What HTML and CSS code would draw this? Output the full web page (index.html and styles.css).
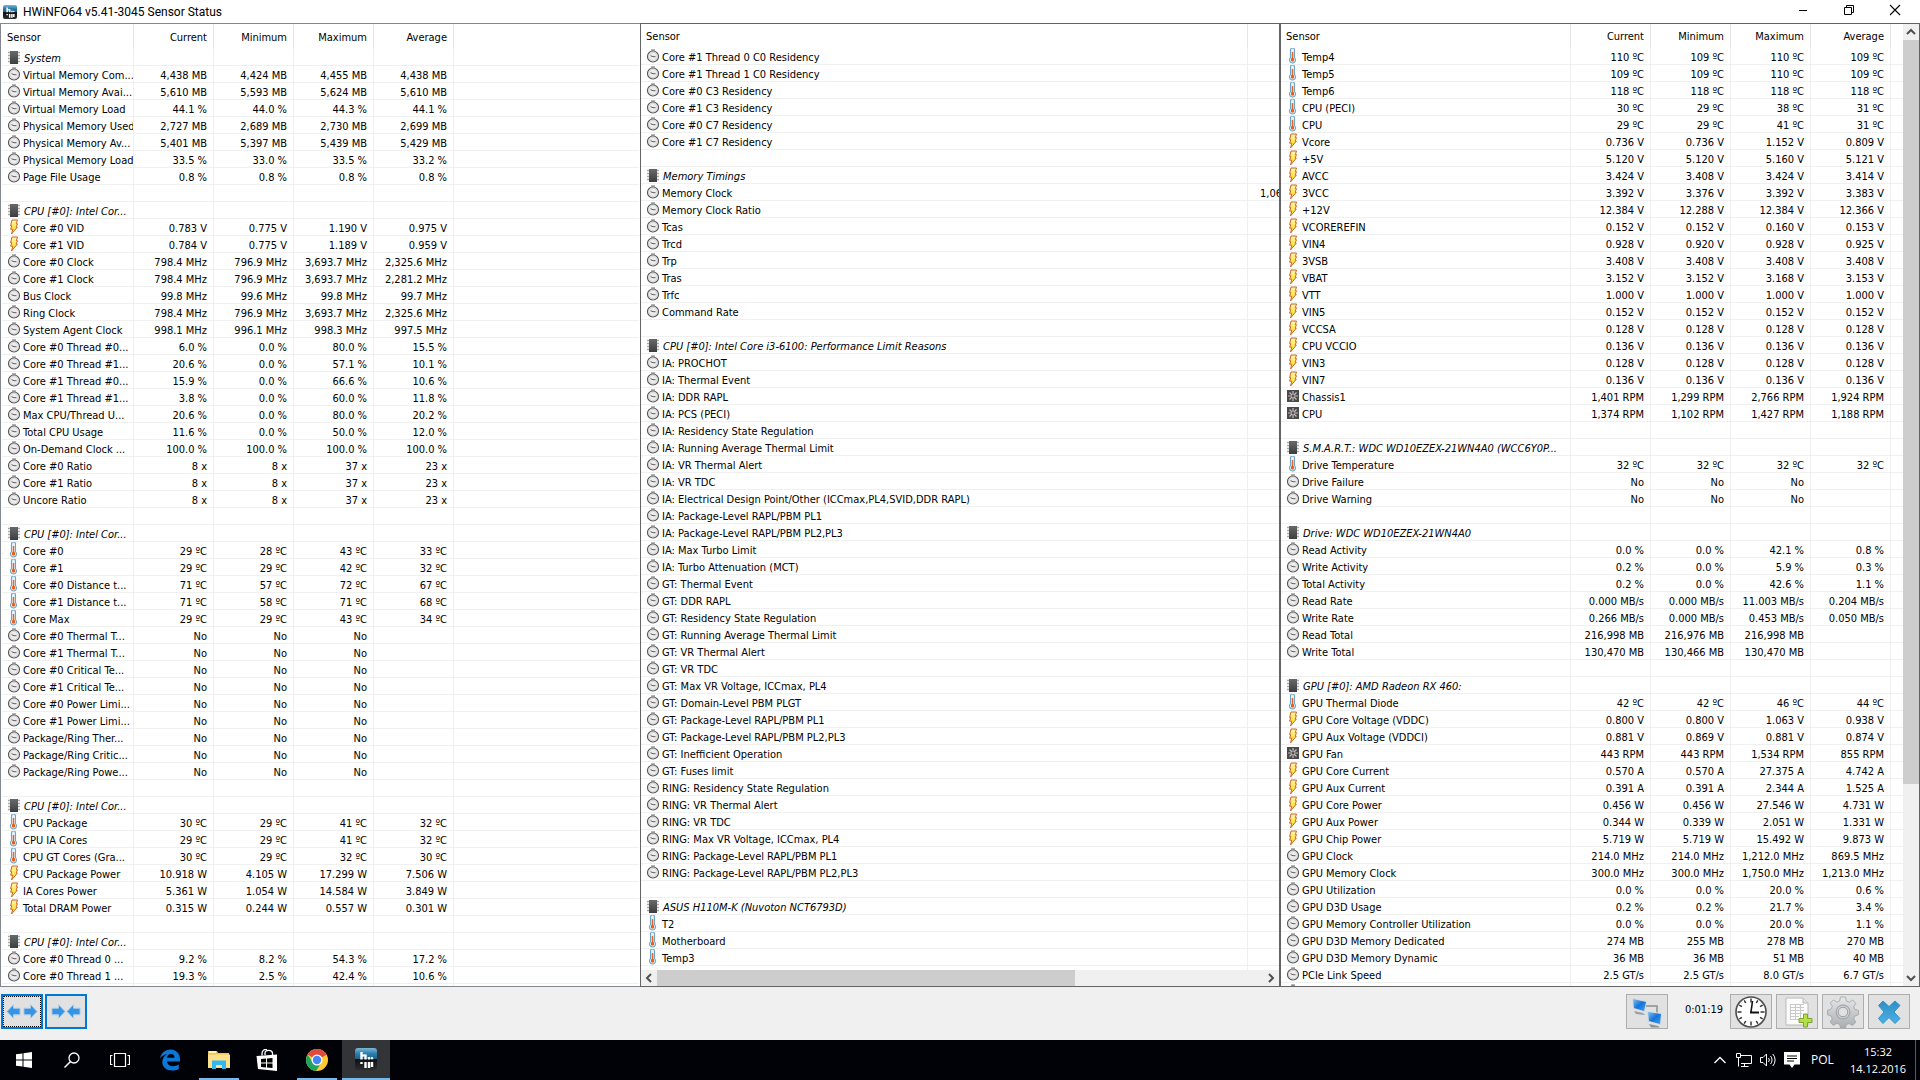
FILE: index.html
```html
<!DOCTYPE html>
<html lang="en">
<head>
<meta charset="utf-8">
<title>HWiNFO64 v5.41-3045 Sensor Status</title>
<link rel="stylesheet" href="styles.css">
</head>
<body>
<svg class="defs" aria-hidden="true">
  <defs>
    <linearGradient id="gChip" x1="0" y1="0" x2="0" y2="1"><stop offset="0" stop-color="#68696b"/><stop offset="1" stop-color="#3c3d3f"/></linearGradient>
    <linearGradient id="gBolt" x1="0" y1="0" x2="0" y2="1"><stop offset="0" stop-color="#fff7b0"/><stop offset="1" stop-color="#ffd800"/></linearGradient>
    <linearGradient id="gLogo" x1="0" y1="0" x2="0" y2="1"><stop offset="0" stop-color="#7fb6d4"/><stop offset=".25" stop-color="#2b7fb0"/><stop offset=".5" stop-color="#1b6088"/><stop offset=".52" stop-color="#111"/><stop offset="1" stop-color="#2a2d30"/></linearGradient>
    <linearGradient id="gGear" x1="0" y1="0" x2="0" y2="1"><stop offset="0" stop-color="#e6e9ea"/><stop offset="1" stop-color="#a8adb0"/></linearGradient>
    <linearGradient id="gScreen" x1="0" y1="0" x2="1" y2="1"><stop offset="0" stop-color="#7cc4f4"/><stop offset=".5" stop-color="#1673d8"/><stop offset="1" stop-color="#3fa0f0"/></linearGradient>
    <linearGradient id="gCross" x1="0" y1="0" x2="0" y2="1"><stop offset="0" stop-color="#2b8fc6"/><stop offset="1" stop-color="#4fb0e4"/></linearGradient>
    <symbol id="i-clock" viewBox="0 0 16 16"><rect x="6" y="1" width="4" height="2" fill="#b5b5b5"/><circle cx="8" cy="8.500" r="5.500" fill="#ececec" stroke="#555" stroke-width="1.200"/><circle cx="8" cy="8.500" r="4.300" fill="none" stroke="#d4d4d4" stroke-width="1"/><path d="M5.500 7.700 8 8.700h2.500" stroke="#6d5a5a" stroke-width="1" fill="none"/></symbol>
    <symbol id="i-chip" viewBox="0 0 16 16"><path d="M2 3.500h12M2 6.500h12M2 9.500h12M2 12.500h12" stroke="#a9a9a9" stroke-width="1.400"/><rect x="4" y="2" width="8" height="13" fill="url(#gChip)"/></symbol>
    <symbol id="i-bolt" viewBox="0 0 16 16"><path d="M6 1h5.500L10.300 4.700h1.200l-1.400 3.500h1.200L5.500 15 6.800 10.200H4.600l1.200-3.500H4.600z" fill="url(#gBolt)" stroke="#c8672a" stroke-width="1"/></symbol>
    <symbol id="i-temp" viewBox="0 0 16 16"><path d="M5.500 2a2 2 0 0 1 4 0v7.700a3 3 0 1 1-4 0z" fill="#e4f3fb" stroke="#6fa3c4" stroke-width="1.100"/><path d="M7.500 4v7" stroke="#e8642a" stroke-width="1.500"/><rect x="6" y="10" width="3" height="3.500" rx="1" fill="#f05a12"/></symbol>
    <symbol id="i-fan" viewBox="0 0 16 16"><rect x="2" y="2" width="12" height="12" fill="#4a4a4a"/><path d="M8 3v10M3 8h10M4.500 4.500l7 7M11.500 4.500l-7 7" stroke="#bdbdbd" stroke-width="1.200"/><circle cx="8" cy="8" r="1.400" fill="#6a4a4e"/></symbol>
    <symbol id="i-logo" viewBox="0 0 22 22"><rect width="22" height="22" rx="3" fill="url(#gLogo)"/><path d="M6.500 4v7.500M10.500 6.500v5M14 9v2.500M6.500 14v2M10.500 14v6M14 14v6M17 14v5" stroke="#fff" stroke-width="2.400"/><path d="M6.500 7.500h4" stroke="#fff" stroke-width="2"/><circle cx="17" cy="10.300" r="1.200" fill="#fff"/></symbol>
    <symbol id="i-arrow" viewBox="0 0 16 18"><path d="M1 5.500h7V1.500L15 9l-7 7.500v-4H1z" fill="#3394e8" stroke="#b5cfe2" stroke-width="1"/></symbol>
  </defs>
</svg>

<header class="titlebar">
  <svg class="app-icon" viewBox="0 0 22 22"><use href="#i-logo"/></svg>
  <h1 class="title">HWiNFO64 v5.41-3045 Sensor Status</h1>
  <div class="window-controls">
    <button class="win-btn" aria-label="Minimize"><svg viewBox="0 0 12 12"><path d="M2 6.500h8" stroke="#000"/></svg></button>
    <button class="win-btn" aria-label="Restore"><svg viewBox="0 0 12 12"><path d="M1.500 3.500h7v7h-7zM3.500 3.500v-2h7v7h-2" fill="none" stroke="#000"/></svg></button>
    <button class="win-btn" aria-label="Close"><svg viewBox="0 0 12 12"><path d="M1 1l10 10M11 1L1 11" stroke="#000" stroke-width="1.100"/></svg></button>
  </div>
</header>

<main class="panels">
  <section class="panel panel-left" aria-label="Sensors, part 1">
    <div class="list">
      <table class="sensors" id="left">
        <colgroup><col class="c-name"><col class="c-val"><col class="c-val"><col class="c-val"><col class="c-val"><col></colgroup>
      </table>
    </div>
  </section>
  <section class="panel panel-mid" aria-label="Sensors, part 2">
    <div class="list">
      <table class="sensors" id="middle">
        <colgroup><col><col class="c-peek"></colgroup>
      </table>
    </div>
    <div class="hscroll">
      <button class="scroll-btn" aria-label="Scroll left"><svg viewBox="0 0 16 16"><path d="M10 4L6 8l4 4" fill="none" stroke="#505050" stroke-width="2"/></svg></button>
      <div class="htrack"><div class="hthumb"></div></div>
      <button class="scroll-btn" aria-label="Scroll right"><svg viewBox="0 0 16 16"><path d="M6 4l4 4-4 4" fill="none" stroke="#505050" stroke-width="2"/></svg></button>
    </div>
  </section>
  <section class="panel panel-right" aria-label="Sensors, part 3">
    <div class="list">
      <table class="sensors" id="right">
        <colgroup><col><col class="c-val"><col class="c-val"><col class="c-val"><col class="c-val"><col class="c-end"></colgroup>
      </table>
    </div>
    <div class="vscroll">
      <button class="scroll-btn" aria-label="Scroll up"><svg viewBox="0 0 16 16"><path d="M4 10l4-4 4 4" fill="none" stroke="#505050" stroke-width="2"/></svg></button>
      <div class="vtrack"><div class="vthumb"></div></div>
      <button class="scroll-btn" aria-label="Scroll down"><svg viewBox="0 0 16 16"><path d="M4 6l4 4 4-4" fill="none" stroke="#505050" stroke-width="2"/></svg></button>
    </div>
  </section>
</main>

<div class="toolbar">
  <button class="tool active focused" aria-label="Expand columns">
    <svg class="arrow flip" viewBox="0 0 16 18"><use href="#i-arrow"/></svg><svg class="arrow" viewBox="0 0 16 18"><use href="#i-arrow"/></svg>
  </button>
  <button class="tool active" aria-label="Shrink columns">
    <svg class="arrow" viewBox="0 0 16 18"><use href="#i-arrow"/></svg><svg class="arrow flip" viewBox="0 0 16 18"><use href="#i-arrow"/></svg>
  </button>
  <div class="tool-right">
    <button class="tool" aria-label="Remote monitoring">
      <svg class="glyph" viewBox="0 0 32 32"><path d="M15 10h11v8" fill="none" stroke="#8b8f92" stroke-width="1.500"/><path d="M3 15l9 2 2 2-9-1z" fill="#9a9fa3"/><path d="M1 2l15 3-2 11L2 13z" fill="#d5dade"/><path d="M2 3l13 3-2 9L3 12z" fill="url(#gScreen)"/><path d="M18 28l9 2 2 1.500H20z" fill="#8d9296"/><path d="M16 15l15 2-1 12-13-3z" fill="#d5dade"/><path d="M17 16l13 2-1 10-11-3z" fill="url(#gScreen)"/></svg>
    </button>
    <span class="elapsed">0:01:19</span>
    <button class="tool" aria-label="Reset clock">
      <svg class="glyph" viewBox="0 0 32 32"><circle cx="16" cy="16" r="15" fill="#fff" stroke="#4d4d4d" stroke-width="1.600"/><path d="M16 2.500v4M16 25.500v4M2.500 16h4M25.500 16h4M9.200 4.300l1.500 2.700M22.800 4.300L21.300 7M4.300 9.200L7 10.700M27.700 9.200L25 10.700M4.300 22.800L7 21.300M27.700 22.800L25 21.300M9.200 27.700l1.500-2.700M22.800 27.700L21.300 25" stroke="#333" stroke-width="1.500"/><path d="M17.500 5L16 16" stroke="#111" stroke-width="1.600"/><path d="M15 16.500h9" stroke="#111" stroke-width="2"/></svg>
    </button>
    <button class="tool" aria-label="Log to file">
      <svg class="glyph" viewBox="0 0 32 32"><path d="M5 2h17l5 5v22H5z" fill="#fcfcfc" stroke="#b9b9b9"/><path d="M22 2v5h5" fill="#e4e4e4" stroke="#b9b9b9"/><path d="M9.500 8v15M14.500 8v15M19.500 8v15M9 8.500h14M9 11.500h14M9 14.500h14M9 17.500h12M9 20.500h9M9 23.500h9" stroke="#c9c9c9"/><path d="M22.500 18h4v4.500H31v4h-4.500V31h-4v-4.500H18v-4h4.500z" fill="#b5dd4c" stroke="#7aa52a"/></svg>
    </button>
    <button class="tool" aria-label="Settings">
      <svg class="glyph" viewBox="0 0 32 32"><g fill="url(#gGear)" stroke="#9da3a6" stroke-width=".8"><path d="M13.500 1h5l.8 4 3 1.200L25.800 4l3 3.400-2 3.500 1.200 2.600 3.500.8v4.400l-3.700 1.300-1 2.700 2 3.600-3.300 3.200-3.500-2-2.700 1.200-.8 3.300h-5l-.8-3.500-2.800-1.200-3.500 2.100-3.200-3.400 2-3.300-1.200-2.900-3.500-1v-4.500l3.600-1.200 1.200-2.700-2-3.300L6.400 4l3.400 2.200 2.800-1.200z"/></g><circle cx="16" cy="16" r="7.500" fill="#a3a8ab"/><circle cx="16" cy="16" r="6.200" fill="#d3d7d9"/><circle cx="16" cy="16" r="4.800" fill="#e1e1e1" stroke="#85898c" stroke-width=".8"/></svg>
    </button>
    <button class="tool" aria-label="Close sensors">
      <svg class="glyph" viewBox="0 0 32 32"><path d="M5.500 9.500L10 5l6 5.500L22 5l5 4.500-6 6.500 6 6.500-5 5-6-6-6 6-4.500-5 5.500-6.500z" fill="url(#gCross)" stroke="#2f93cc" stroke-width="1"/></svg>
    </button>
  </div>
</div>

<footer class="taskbar">
  <nav class="apps">
    <button class="task" aria-label="Start"><svg class="ic16" viewBox="0 0 16 16"><path d="M0 2.300L6.500 1.400v6.100H0zM7.500 1.200L16 0v7.500H7.500zM0 8.500h6.500v6.100L0 13.700zM7.500 8.500H16V16l-8.500-1.200z" fill="#fff"/></svg></button>
    <button class="task" aria-label="Search"><svg class="ic16" viewBox="0 0 16 16"><circle cx="10" cy="6" r="5" fill="none" stroke="#fff" stroke-width="1.300"/><path d="M6.500 9.500L.5 15.500" stroke="#fff" stroke-width="1.500"/></svg></button>
    <button class="task" aria-label="Task view"><svg class="ic20" viewBox="0 0 20 20"><path d="M4.500 3.500h11v13h-11zM2.500 5.500h-2v9h2M17.500 5.500h2v9h-2" fill="none" stroke="#fff" stroke-width="1.200"/></svg></button>
    <button class="task wide" aria-label="Edge"><svg class="ic22" viewBox="0 0 22 22"><path d="M1 9.500C2 4 6 .5 11.500.5 17.500.5 21 5 21 10v2.500H8c.2 3 3 4.700 6 4.700 2.200 0 4-.6 5.800-1.600v4.300c-2 1-4.200 1.600-6.800 1.600-5.500 0-9.700-3-9.700-8.500 0-3.500 2-6.300 5-8C4.500 5.700 2.200 7.300 1 9.500zM8 8.800h7.500C15.500 6.300 14.300 5 12 5 9.800 5 8.300 6.500 8 8.800z" fill="#0a78d6"/></svg></button>
    <button class="task open" aria-label="File Explorer"><svg class="ic22" viewBox="0 0 22 22"><path d="M0 2h9l1 2h11v15H0z" fill="#f0c455"/><path d="M1 2h7v2H1z" fill="#fff3c0"/><path d="M0 5.500h22V19H0z" fill="#fde08a"/><path d="M4 20v-8.500h14V20h-4v-4H8v4z" fill="#32b8f0"/></svg></button>
    <button class="task" aria-label="Store"><svg class="ic22" viewBox="0 0 22 22"><path d="M6 6.500V4.500C6 1 9 0 11 .5M9 6V4c0-3.500 7-3.500 7.500 0V6" fill="none" stroke="#fff" stroke-width="1.300"/><path d="M.5 7L21 5.500V22L2 20z" fill="#fff"/><path d="M5 10l5-.5v4H5zM11 9.400l5.500-.5v4.600H11zM5 14.500h5v4l-5-.5zM11 14.500h5.500V19l-5.500-.4z" fill="#000"/></svg></button>
    <button class="task open wide" aria-label="Chrome"><svg class="ic22" viewBox="0 0 22 22"><circle cx="11" cy="11" r="11" fill="#fcc934"/><path d="M11 11L1.500 5.500A11 11 0 0 1 20.500 5.500z" fill="#dd4b3e"/><path d="M1.500 5.500A11 11 0 0 0 10 22l5.300-8.500L6.200 12.500z" fill="#1da462"/><path d="M11 5.500h9.500L11 11z" fill="#dd4b3e"/><circle cx="11" cy="11" r="5.500" fill="#fff"/><circle cx="11" cy="11" r="4.200" fill="#4285f4"/></svg></button>
    <button class="task current" aria-label="HWiNFO64"><svg class="ic22" viewBox="0 0 22 22"><use href="#i-logo"/></svg></button>
  </nav>
  <div class="tray">
    <svg class="ic16" viewBox="0 0 16 16"><path d="M2.500 11L8 5.500l5.500 5.500" fill="none" stroke="#fff" stroke-width="1.300"/></svg>
    <svg class="ic16" viewBox="0 0 16 16"><path d="M4 3.500h11.500v8H5M8.500 11.500v3M5 14.500h7.500M.5 1.500h4v4h-4zM2.500 5.500v9" fill="none" stroke="#fff"/></svg>
    <svg class="ic16" viewBox="0 0 16 16"><path d="M.5 5.500h2.500L6.500 2v12L3 10.500H.5zM8.500 6a3 3 0 0 1 0 4M10.500 4a6 6 0 0 1 0 8M12.800 2a9 9 0 0 1 0 12" fill="none" stroke="#fff"/></svg>
    <svg class="ic16" viewBox="0 0 16 16"><path d="M0 0h16v12.500h-5.500L8 16l-2.500-3.500H0z" fill="#fff"/><path d="M3 4h10M3 6.500h10M3 9h7" stroke="#000"/></svg>
    <span class="lang">POL</span>
    <time class="clock" datetime="2016-12-14T15:32"><span>15:32</span><span>14.12.2016</span></time>
    <button class="show-desktop" aria-label="Show desktop"></button>
  </div>
</footer>
<script src="app.js"></script>
</body>
</html>
```

FILE: styles.css
```css
* { box-sizing: border-box; }

body {
  margin: 0;
  height: 100vh;
  display: flex;
  flex-direction: column;
  background: #f0f0f0;
  color: #000;
  font: 11px/16px "DejaVu Sans Condensed", "Noto Sans", sans-serif;
  overflow: hidden;
}

button { border: 0; padding: 0; margin: 0; background: none; font: inherit; color: inherit; }
svg { display: block; flex: none; }
.defs { position: absolute; width: 0; height: 0; }

/* Title bar */
.titlebar { display: flex; align-items: center; height: 23px; padding: 0 2px 0 3px; background: #fff; flex: none; }
.app-icon { width: 14px; height: 14px; }
.title { margin: 0 0 0 6px; font: 12px/16px Roboto, sans-serif; }
.window-controls { display: flex; align-self: flex-start; margin-left: auto; }
.win-btn { width: 46px; height: 20px; display: flex; align-items: center; justify-content: center; }
.win-btn svg { width: 12px; height: 12px; }

/* Sensor panels */
.panels { flex: 1; min-height: 0; display: grid; grid-template-columns: repeat(3, minmax(0, 1fr)); }
.panel { display: flex; min-width: 0; min-height: 0; background: #fff; border: 1px solid #646464; overflow: hidden; }
.panel-left { border-color: #828790; border-right: 0; padding: 0 1px; }
.panel-mid { flex-direction: column; }
.list { flex: 1; min-width: 0; min-height: 0; overflow: hidden; }

.sensors { width: 100%; border-collapse: separate; border-spacing: 0; table-layout: fixed; }
.c-name { width: 132px; }
.c-val { width: 80px; }
.c-peek { width: 31px; }
.c-end { width: 12px; }
.sensors th { height: 24px; padding: 2px 6px 0 5px; font-weight: normal; text-align: left; border-right: 1px solid #e5e5e5; white-space: nowrap; }
.panel-left .sensors th { height: 25px; }
.sensors th.num, .sensors td { text-align: right; }
.sensors td, .sensors tbody th { height: 17px; border-right: 1px solid #f0f0f0; border-bottom: 1px solid #f0f0f0; white-space: nowrap; overflow: hidden; }
.sensors td { padding: 4px 6px 0 0; line-height: 12px; }
.panel .sensors tbody th { height: 17px; padding: 0 0 0 4px; }
.sensors tr > :last-child { border-right: 0; }
.sensors .peek { text-align: left; padding-left: 12px; padding-right: 0; }
.sensors .filler > * { border-bottom: 0; }
.name { display: flex; align-items: center; gap: 1px; height: 16px; }
.name svg { width: 16px; height: 16px; }
.name span { padding-top: 4px; line-height: 12px; }
.group .name { font-style: italic; }
.group .name span { padding-left: 1px; }

/* Scroll bars */
.scroll-btn { width: 16px; height: 16px; flex: none; }
.scroll-btn svg { width: 16px; height: 16px; }
.hscroll { display: flex; height: 16px; background: #f0f0f0; flex: none; }
.htrack { flex: 1; }
.hthumb { width: 69%; height: 100%; background: #cdcdcd; }
.vscroll { display: flex; flex-direction: column; width: 16px; background: #f0f0f0; flex: none; }
.vtrack { flex: 1; }
.vthumb { width: 100%; height: 80%; background: #cdcdcd; }

/* Toolbar */
.toolbar { display: flex; align-items: flex-start; gap: 2px; height: 53px; padding: 7px 10px 0 1px; flex: none; }
.tool { display: flex; align-items: center; justify-content: center; width: 42px; height: 35px; background: #e1e1e1; border: 1px solid #adadad; }
.tool.active { border: 2px solid #0078d7; }
.tool.focused { gap: 2px; outline: 1px dotted #000; outline-offset: -3px; }
.tool-right { display: flex; gap: 4px; margin-left: auto; }
.elapsed { width: 54px; padding-left: 10px; text-align: center; line-height: 32px; }
.arrow { width: 15px; height: 17px; }
.flip { transform: scaleX(-1); }
.glyph { width: 32px; height: 32px; }

/* Taskbar */
.taskbar { display: flex; justify-content: space-between; height: 40px; background: #000207; color: #fff; flex: none; font: 11px/16px "Open Sans", sans-serif; }
.apps, .tray { display: flex; align-items: center; }
.task { display: flex; align-items: center; justify-content: center; width: 48px; height: 40px; }
.task.wide { width: 51px; }
.task.open { background: linear-gradient(#76b9ed, #76b9ed) center bottom / 40px 2px no-repeat; }
.task.current { background: #333438; border-bottom: 2px solid #76b9ed; }
.ic16 { width: 16px; height: 16px; }
.ic20 { width: 20px; height: 20px; }
.ic22 { width: 22px; height: 22px; }
.tray { gap: 8px; }
.lang { width: 24px; margin: 0 6px 0 3px; font-size: 12px; }
.clock { display: flex; flex-direction: column; align-items: center; width: 58px; line-height: 17px; }
.show-desktop { width: 5px; height: 40px; border-left: 1px solid #5a5c60; }
```

FILE: app.js
```js
// One reading per line: icon|name|current|minimum|maximum|average. Empty lines are spacer rows.
// Icons: g = group (chip), c = generic, v = voltage/power, t = temperature, f = fan.
const LEFT = `g|System
c|Virtual Memory Com...|4,438 MB|4,424 MB|4,455 MB|4,438 MB
c|Virtual Memory Avai...|5,610 MB|5,593 MB|5,624 MB|5,610 MB
c|Virtual Memory Load|44.1 %|44.0 %|44.3 %|44.1 %
c|Physical Memory Used|2,727 MB|2,689 MB|2,730 MB|2,699 MB
c|Physical Memory Av...|5,401 MB|5,397 MB|5,439 MB|5,429 MB
c|Physical Memory Load|33.5 %|33.0 %|33.5 %|33.2 %
c|Page File Usage|0.8 %|0.8 %|0.8 %|0.8 %

g|CPU [#0]: Intel Cor...
v|Core #0 VID|0.783 V|0.775 V|1.190 V|0.975 V
v|Core #1 VID|0.784 V|0.775 V|1.189 V|0.959 V
c|Core #0 Clock|798.4 MHz|796.9 MHz|3,693.7 MHz|2,325.6 MHz
c|Core #1 Clock|798.4 MHz|796.9 MHz|3,693.7 MHz|2,281.2 MHz
c|Bus Clock|99.8 MHz|99.6 MHz|99.8 MHz|99.7 MHz
c|Ring Clock|798.4 MHz|796.9 MHz|3,693.7 MHz|2,325.6 MHz
c|System Agent Clock|998.1 MHz|996.1 MHz|998.3 MHz|997.5 MHz
c|Core #0 Thread #0...|6.0 %|0.0 %|80.0 %|15.5 %
c|Core #0 Thread #1...|20.6 %|0.0 %|57.1 %|10.1 %
c|Core #1 Thread #0...|15.9 %|0.0 %|66.6 %|10.6 %
c|Core #1 Thread #1...|3.8 %|0.0 %|60.0 %|11.8 %
c|Max CPU/Thread U...|20.6 %|0.0 %|80.0 %|20.2 %
c|Total CPU Usage|11.6 %|0.0 %|50.0 %|12.0 %
c|On-Demand Clock ...|100.0 %|100.0 %|100.0 %|100.0 %
c|Core #0 Ratio|8 x|8 x|37 x|23 x
c|Core #1 Ratio|8 x|8 x|37 x|23 x
c|Uncore Ratio|8 x|8 x|37 x|23 x

g|CPU [#0]: Intel Cor...
t|Core #0|29 ºC|28 ºC|43 ºC|33 ºC
t|Core #1|29 ºC|29 ºC|42 ºC|32 ºC
t|Core #0 Distance t...|71 ºC|57 ºC|72 ºC|67 ºC
t|Core #1 Distance t...|71 ºC|58 ºC|71 ºC|68 ºC
t|Core Max|29 ºC|29 ºC|43 ºC|34 ºC
c|Core #0 Thermal T...|No|No|No
c|Core #1 Thermal T...|No|No|No
c|Core #0 Critical Te...|No|No|No
c|Core #1 Critical Te...|No|No|No
c|Core #0 Power Limi...|No|No|No
c|Core #1 Power Limi...|No|No|No
c|Package/Ring Ther...|No|No|No
c|Package/Ring Critic...|No|No|No
c|Package/Ring Powe...|No|No|No

g|CPU [#0]: Intel Cor...
t|CPU Package|30 ºC|29 ºC|41 ºC|32 ºC
t|CPU IA Cores|29 ºC|29 ºC|41 ºC|32 ºC
t|CPU GT Cores (Gra...|30 ºC|29 ºC|32 ºC|30 ºC
v|CPU Package Power|10.918 W|4.105 W|17.299 W|7.506 W
v|IA Cores Power|5.361 W|1.054 W|14.584 W|3.849 W
v|Total DRAM Power|0.315 W|0.244 W|0.557 W|0.301 W

g|CPU [#0]: Intel Cor...
c|Core #0 Thread 0 ...|9.2 %|8.2 %|54.3 %|17.2 %
c|Core #0 Thread 1 ...|19.3 %|2.5 %|42.4 %|10.6 %`;

const MIDDLE = `c|Core #1 Thread 0 C0 Residency
c|Core #1 Thread 1 C0 Residency
c|Core #0 C3 Residency
c|Core #1 C3 Residency
c|Core #0 C7 Residency
c|Core #1 C7 Residency

g|Memory Timings
c|Memory Clock|1,06
c|Memory Clock Ratio
c|Tcas
c|Trcd
c|Trp
c|Tras
c|Trfc
c|Command Rate

g|CPU [#0]: Intel Core i3-6100: Performance Limit Reasons
c|IA: PROCHOT
c|IA: Thermal Event
c|IA: DDR RAPL
c|IA: PCS (PECI)
c|IA: Residency State Regulation
c|IA: Running Average Thermal Limit
c|IA: VR Thermal Alert
c|IA: VR TDC
c|IA: Electrical Design Point/Other (ICCmax,PL4,SVID,DDR RAPL)
c|IA: Package-Level RAPL/PBM PL1
c|IA: Package-Level RAPL/PBM PL2,PL3
c|IA: Max Turbo Limit
c|IA: Turbo Attenuation (MCT)
c|GT: Thermal Event
c|GT: DDR RAPL
c|GT: Residency State Regulation
c|GT: Running Average Thermal Limit
c|GT: VR Thermal Alert
c|GT: VR TDC
c|GT: Max VR Voltage, ICCmax, PL4
c|GT: Domain-Level PBM PLGT
c|GT: Package-Level RAPL/PBM PL1
c|GT: Package-Level RAPL/PBM PL2,PL3
c|GT: Inefficient Operation
c|GT: Fuses limit
c|RING: Residency State Regulation
c|RING: VR Thermal Alert
c|RING: VR TDC
c|RING: Max VR Voltage, ICCmax, PL4
c|RING: Package-Level RAPL/PBM PL1
c|RING: Package-Level RAPL/PBM PL2,PL3

g|ASUS H110M-K (Nuvoton NCT6793D)
t|T2
t|Motherboard
t|Temp3`;

const RIGHT = `t|Temp4|110 ºC|109 ºC|110 ºC|109 ºC
t|Temp5|109 ºC|109 ºC|110 ºC|109 ºC
t|Temp6|118 ºC|118 ºC|118 ºC|118 ºC
t|CPU (PECI)|30 ºC|29 ºC|38 ºC|31 ºC
t|CPU|29 ºC|29 ºC|41 ºC|31 ºC
v|Vcore|0.736 V|0.736 V|1.152 V|0.809 V
v|+5V|5.120 V|5.120 V|5.160 V|5.121 V
v|AVCC|3.424 V|3.408 V|3.424 V|3.414 V
v|3VCC|3.392 V|3.376 V|3.392 V|3.383 V
v|+12V|12.384 V|12.288 V|12.384 V|12.366 V
v|VCOREREFIN|0.152 V|0.152 V|0.160 V|0.153 V
v|VIN4|0.928 V|0.920 V|0.928 V|0.925 V
v|3VSB|3.408 V|3.408 V|3.408 V|3.408 V
v|VBAT|3.152 V|3.152 V|3.168 V|3.153 V
v|VTT|1.000 V|1.000 V|1.000 V|1.000 V
v|VIN5|0.152 V|0.152 V|0.152 V|0.152 V
v|VCCSA|0.128 V|0.128 V|0.128 V|0.128 V
v|CPU VCCIO|0.136 V|0.136 V|0.136 V|0.136 V
v|VIN3|0.128 V|0.128 V|0.128 V|0.128 V
v|VIN7|0.136 V|0.136 V|0.136 V|0.136 V
f|Chassis1|1,401 RPM|1,299 RPM|2,766 RPM|1,924 RPM
f|CPU|1,374 RPM|1,102 RPM|1,427 RPM|1,188 RPM

g|S.M.A.R.T.: WDC WD10EZEX-21WN4A0 (WCC6Y0P...
t|Drive Temperature|32 ºC|32 ºC|32 ºC|32 ºC
c|Drive Failure|No|No|No
c|Drive Warning|No|No|No

g|Drive: WDC WD10EZEX-21WN4A0
c|Read Activity|0.0 %|0.0 %|42.1 %|0.8 %
c|Write Activity|0.2 %|0.0 %|5.9 %|0.3 %
c|Total Activity|0.2 %|0.0 %|42.6 %|1.1 %
c|Read Rate|0.000 MB/s|0.000 MB/s|11.003 MB/s|0.204 MB/s
c|Write Rate|0.266 MB/s|0.000 MB/s|0.453 MB/s|0.050 MB/s
c|Read Total|216,998 MB|216,976 MB|216,998 MB
c|Write Total|130,470 MB|130,466 MB|130,470 MB

g|GPU [#0]: AMD Radeon RX 460:
t|GPU Thermal Diode|42 ºC|42 ºC|46 ºC|44 ºC
v|GPU Core Voltage (VDDC)|0.800 V|0.800 V|1.063 V|0.938 V
v|GPU Aux Voltage (VDDCI)|0.881 V|0.869 V|0.881 V|0.874 V
f|GPU Fan|443 RPM|443 RPM|1,534 RPM|855 RPM
v|GPU Core Current|0.570 A|0.570 A|27.375 A|4.742 A
v|GPU Aux Current|0.391 A|0.391 A|2.344 A|1.525 A
v|GPU Core Power|0.456 W|0.456 W|27.546 W|4.731 W
v|GPU Aux Power|0.344 W|0.339 W|2.051 W|1.331 W
v|GPU Chip Power|5.719 W|5.719 W|15.492 W|9.873 W
c|GPU Clock|214.0 MHz|214.0 MHz|1,212.0 MHz|869.5 MHz
c|GPU Memory Clock|300.0 MHz|300.0 MHz|1,750.0 MHz|1,213.0 MHz
c|GPU Utilization|0.0 %|0.0 %|20.0 %|0.6 %
c|GPU D3D Usage|0.2 %|0.2 %|21.7 %|3.4 %
c|GPU Memory Controller Utilization|0.0 %|0.0 %|20.0 %|1.1 %
c|GPU D3D Memory Dedicated|274 MB|255 MB|278 MB|270 MB
c|GPU D3D Memory Dynamic|36 MB|36 MB|51 MB|40 MB
c|PCIe Link Speed|2.5 GT/s|2.5 GT/s|8.0 GT/s|6.7 GT/s
c|`;

const ICONS = { g: 'chip', c: 'clock', v: 'bolt', t: 'temp', f: 'fan' };

function fill(id, data, heads, columns) {
  const body = data.split('\n').map(line => {
    const [icon, name = '', ...values] = line.split('|');
    const label = icon
      ? `<svg viewBox="0 0 16 16"><use href="#i-${ICONS[icon]}"/></svg><span>${name}</span>`
      : '';
    let cells = '';
    for (let i = 0; i < columns; i++) {
      cells += `<td${id === 'middle' ? ' class="peek"' : ''}>${values[i] || ''}</td>`;
    }
    return `<tr${icon === 'g' ? ' class="group"' : ''}><th scope="row"><div class="name">${label}</div></th>${cells}</tr>`;
  }).join('');
  const filler = `<tr class="filler"><th></th>${'<td></td>'.repeat(columns)}</tr>`;
  const head = heads.map((h, i) => `<th scope="col"${i ? ' class="num"' : ''}>${h}</th>`).join('');
  document.getElementById(id).insertAdjacentHTML('beforeend',
    `<thead><tr>${head}</tr></thead><tbody>${body}${filler}</tbody>`);
}

const HEADS = ['Sensor', 'Current', 'Minimum', 'Maximum', 'Average', ''];
fill('left', LEFT, HEADS, 5);
fill('middle', MIDDLE, ['Sensor', ''], 1);
fill('right', RIGHT, HEADS, 5);
```
